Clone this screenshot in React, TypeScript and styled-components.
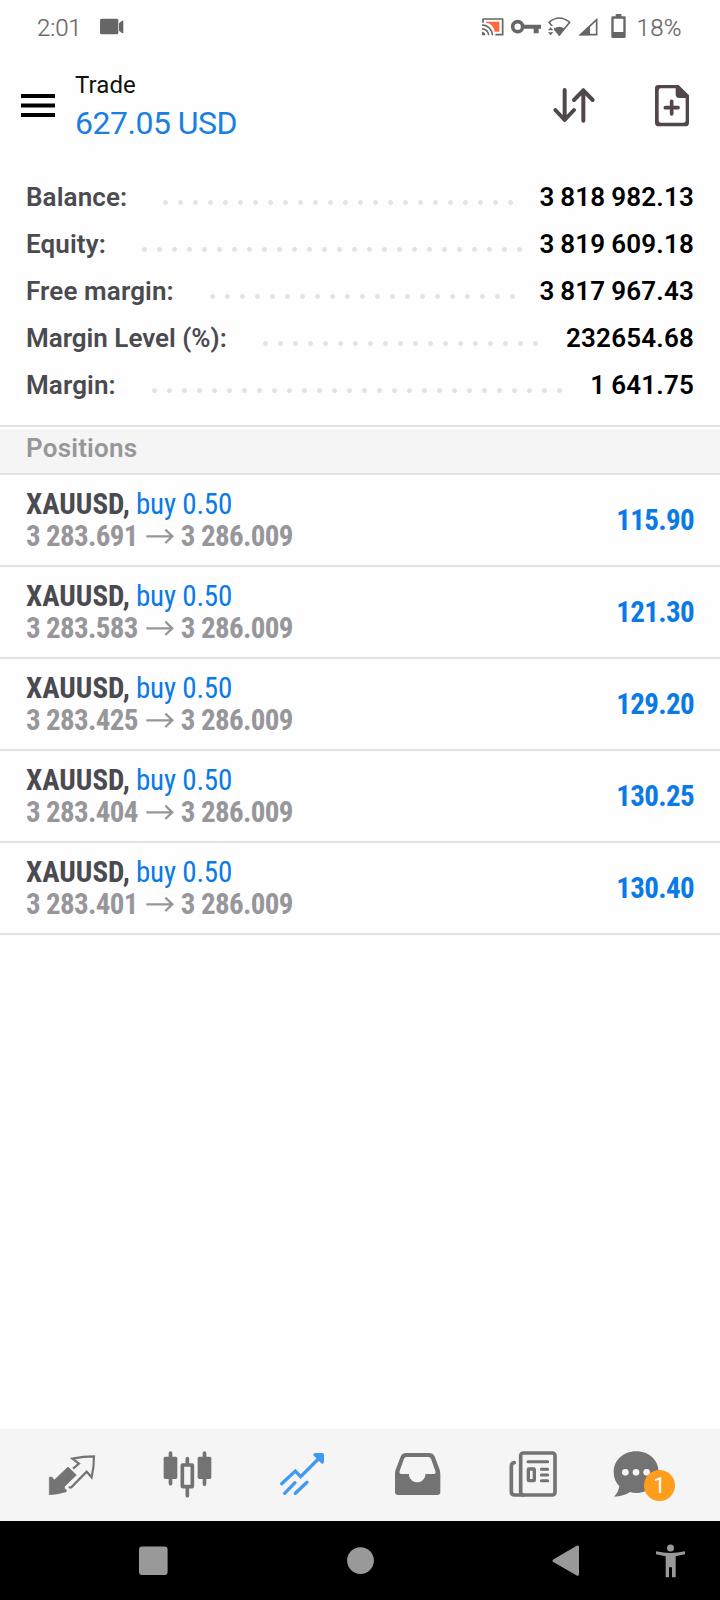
import React from "react";
import styled, { createGlobalStyle } from "styled-components";

const GlobalStyle = createGlobalStyle`
  * { box-sizing: border-box; }
  body {
    margin: 0;
    background: #fefefe;
    font-family: Roboto, "Liberation Sans", sans-serif;
    -webkit-font-smoothing: antialiased;
  }
`;

const Screen = styled.div`
  width: 720px;
  height: 1600px;
  display: flex;
  flex-direction: column;
  background: #fefefe;
  overflow: hidden;
`;

const Glyph = styled.svg<{ $w: number; $h: number; $after?: number }>`
  display: block;
  flex: none;
  width: ${(p) => p.$w}px;
  height: ${(p) => p.$h}px;
  margin-right: ${(p) => p.$after ?? 0}px;
  overflow: visible;
`;

const StatusBar = styled.div`
  height: 56px;
  flex: none;
  display: flex;
  align-items: center;
  justify-content: space-between;
  padding: 0 38px 2px 37px;
  color: #666;
`;

const StatusGroup = styled.div<{ $gap?: number }>`
  display: flex;
  align-items: center;
  gap: ${(p) => p.$gap ?? 0}px;
`;

const StatusText = styled.span<{ $spacing: number }>`
  padding-top: 1px;
  font-size: 24px;
  line-height: 28px;
  font-weight: 300;
  letter-spacing: ${(p) => p.$spacing}px;
  -webkit-text-stroke: 0.2px;
`;

const Header = styled.header`
  height: 117px;
  flex: none;
  display: flex;
  align-items: flex-start;
  padding-left: 21px;
  padding-right: 31px;
`;

const IconButton = styled.button<{ $top: number; $left?: number }>`
  border: 0;
  background: none;
  padding: 0;
  margin-top: ${(p) => p.$top}px;
  margin-left: ${(p) => p.$left ?? 0}px;
`;

const Heading = styled.div`
  flex: 1;
  margin-left: 20px;
  padding-top: 15px;
`;

const Title = styled.div`
  font-size: 24px;
  line-height: 28px;
  color: #111;
  letter-spacing: 0.1px;
`;

const Profit = styled.div`
  margin-top: 5px;
  font-size: 32px;
  line-height: 38px;
  letter-spacing: -0.5px;
  color: #1a80e0;
`;

const Summary = styled.section`
  height: 252px;
  flex: none;
  display: flex;
  flex-direction: column;
`;

const SummaryRow = styled.div`
  height: 47px;
  flex: none;
  display: flex;
  align-items: center;
  padding: 0 26px;
  font-size: 26px;
  font-weight: 600;
`;

const Label = styled.span<{ $tight?: boolean }>`
  color: #4a4a50;
  letter-spacing: ${(p) => (p.$tight ? "0" : "0.12px")};
  white-space: nowrap;
`;

const Leader = styled.i<{ $count: number }>`
  flex: none;
  margin-left: 36px;
  margin-top: 11px;
  height: 5px;
  width: ${(p) => p.$count * 15 - 10}px;
  background: radial-gradient(circle at 2.5px 2.5px, #e3e3e3 2px, transparent 2.8px) 0 0 / 15px 5px repeat-x;
`;

const Amount = styled.span`
  margin-left: auto;
  color: #000;
  letter-spacing: 0.2px;
  word-spacing: -0.9px;
  white-space: nowrap;
`;

const SectionTitle = styled.div`
  height: 50px;
  flex: none;
  border-top: 2px solid #e3e3e3;
  border-bottom: 2px solid #e3e3e3;
  padding: 0 26px 4px;
  display: flex;
  align-items: center;
  background: linear-gradient(#fefefe 2px, #f5f5f5 2px);
  color: #97979b;
  font-size: 26px;
  font-weight: 600;
  letter-spacing: 0.2px;
`;

const PositionRow = styled.div`
  height: 92px;
  flex: none;
  display: flex;
  align-items: center;
  justify-content: space-between;
  padding: 0 26px;
  border-bottom: 2px solid #e3e3e3;
  font-family: "Roboto Condensed", Roboto, sans-serif;
  font-stretch: 75%;
  font-size: 29px;
  line-height: 32px;
  white-space: nowrap;
`;

const PositionInfo = styled.div`
  display: flex;
  flex-direction: column;
`;

const Symbol = styled.div`
  font-weight: 700;
  color: #4a4a50;
`;

const Side = styled.span`
  margin-left: -0.5px;
  font-weight: 400;
  letter-spacing: -0.2px;
  color: #0a7ae6;
`;

const PriceMove = styled.div`
  display: flex;
  align-items: center;
  gap: 8px;
  font-weight: 700;
  letter-spacing: -0.65px;
  color: #97979b;
`;

const Result = styled.span`
  font-weight: 700;
  letter-spacing: -0.65px;
  color: #0a7ae6;
`;

const Spacer = styled.div`
  flex: 1;
`;

const TabBar = styled.nav`
  height: 92px;
  flex: none;
  display: grid;
  grid-template-columns: repeat(6, 115px);
  justify-content: center;
  background: #f5f5f5;
`;

const Tab = styled.div<{ $active?: boolean }>`
  position: relative;
  display: flex;
  align-items: center;
  justify-content: center;
  color: ${(p) => (p.$active ? "#4399f2" : "#737373")};
`;

const Badge = styled.span`
  position: absolute;
  left: 54px;
  top: 41px;
  width: 31px;
  height: 31px;
  border-radius: 50%;
  background: #ff9d1c;
  color: #fff;
  font-size: 22px;
  line-height: 32px;
  text-align: center;
`;

const SystemNav = styled.div`
  height: 79px;
  flex: none;
  display: grid;
  grid-template-columns: 207px 206px 104px 30px;
  align-items: center;
  padding-left: 138px;
  background: #000;
  color: #999;
`;

const VideoIcon = () => (
  <Glyph $w={24} $h={18} viewBox="0 0 72 54" fill="currentColor">
    <rect x="0" y="2" width="55" height="47" rx="5" />
    <path d="M57 16 66 8Q70 6 70 11V43Q70 47 66 45L57 38Z" />
  </Glyph>
);

const CastIcon = () => (
  <Glyph $w={22} $h={18} $after={7} viewBox="0 0 66 54" fill="none" stroke="currentColor" strokeWidth="5">
    <path d="M12 11H52V41H38C36 26 25 15 12 14Z" fill="#ff6a3d" stroke="none" />
    <path d="M3 14V3H62V50H40" strokeLinejoin="round" />
    <path d="M0 21A31 31 0 0 1 31 52M0 32A20 20 0 0 1 20 52" strokeWidth="4.5" />
    <path d="M0 42A10 10 0 0 1 10 52H0Z" fill="currentColor" stroke="none" />
  </Glyph>
);

const KeyIcon = () => (
  <Glyph $w={30} $h={18} $after={7} viewBox="0 0 90 54">
    <circle cx="20" cy="26" r="15" fill="none" stroke="currentColor" strokeWidth="11" />
    <path d="M36 20H90V32H83V46H68V32H36Z" fill="currentColor" />
  </Glyph>
);

const WifiIcon = () => (
  <Glyph $w={23} $h={20} $after={8} viewBox="0 0 69 60">
    <path d="M3 16Q34-10 65 16L34 54Z" fill="none" stroke="currentColor" strokeWidth="5" strokeLinejoin="round" />
    <path d="M18 35Q34 24 50 35L34 56Z" fill="currentColor" />
    <path d="M-1 27H18V58H-1Z" fill="#fefefe" />
    <path d="M0 40 8 31 16 40ZM0 46H16L8 55Z" fill="currentColor" />
  </Glyph>
);

const SignalIcon = () => (
  <Glyph $w={19} $h={18} $after={13} viewBox="0 0 57 54">
    <path d="M5 50 53 5V50Z" fill="none" stroke="currentColor" strokeWidth="5" />
    <path d="M0 52 33 22V52Z" fill="currentColor" />
  </Glyph>
);

const BatteryIcon = () => (
  <Glyph $w={15} $h={24} $after={10} viewBox="0 3 45 72">
    <path
      fillRule="evenodd"
      fill="currentColor"
      d="M14 0H31V7H41Q44 7 44 11V68Q44 72 40 72H5Q1 72 1 68V11Q1 7 5 7H14ZM8 14V54H37V14Z"
    />
  </Glyph>
);

const MenuIcon = () => (
  <Glyph $w={34} $h={24} viewBox="0 0 34 24" fill="#000">
    <rect y="0" width="34" height="4" />
    <rect y="9.5" width="34" height="4" />
    <rect y="19" width="34" height="4" />
  </Glyph>
);

const SortIcon = () => (
  <Glyph
    $w={42}
    $h={36}
    viewBox="0 0 126 108"
    fill="none"
    stroke="#51474a"
    strokeWidth="12"
    strokeLinecap="round"
    strokeLinejoin="round"
  >
    <path d="M35 9V99M7 69 35 99 63 69M91 101V10M63 39 91 10 119 39" />
  </Glyph>
);

const NewOrderIcon = () => (
  <Glyph $w={35} $h={42} viewBox="-2 -2 105 126">
    <path
      fillRule="evenodd"
      fill="#51474a"
      d="M11 1H72L103 32V114Q103 125 92 125H12Q1 125 1 114V11Q1 1 11 1ZM18 11Q12 11 12 18V108Q12 114 19 114H86Q93 114 93 108V40H74Q63 40 63 28V11Z"
    />
    <path d="M51 50V88M32 69H70" stroke="#51474a" strokeWidth="11" strokeLinecap="round" />
  </Glyph>
);

const ArrowIcon = () => (
  <Glyph $w={28} $h={16} $after={-1} viewBox="0 0 84 48" fill="none" stroke="currentColor" strokeWidth="7">
    <path d="M1 25H79M58 5 79 25 58 45" />
  </Glyph>
);

const QuotesIcon = () => (
  <Glyph $w={72} $h={72} viewBox="113 57 216 216">
    <path
      d="M206 141 231 165 195 200Q193 205 201 210V215Q175 223 150 224V172L157 171 165 180Z"
      fill="currentColor"
      stroke="currentColor"
      strokeWidth="2"
      strokeLinejoin="round"
    />
    <path
      d="M221 146 239 131 219 116Q252 109 284 109Q284 142 277 172L262 155 216 202H208"
      fill="none"
      stroke="currentColor"
      strokeWidth="6.5"
      strokeLinejoin="miter"
    />
  </Glyph>
);

const ChartIcon = () => (
  <Glyph $w={72} $h={72} viewBox="456 57 216 216" fill="currentColor">
    <rect x="491" y="110" width="41" height="67" rx="5" />
    <rect x="593" y="110" width="41" height="67" rx="5" />
    <path
      d="M511.5 99V191M613.5 99V193M562 116V132M562 204V227"
      stroke="currentColor"
      strokeWidth="11"
      strokeLinecap="round"
    />
    <rect x="547" y="135" width="30" height="65" rx="1" fill="none" stroke="currentColor" strokeWidth="11" />
  </Glyph>
);

const TradeIcon = () => (
  <Glyph
    $w={72}
    $h={72}
    viewBox="801 57 216 216"
    fill="none"
    stroke="currentColor"
    strokeWidth="10"
    strokeLinecap="round"
  >
    <path d="M845 191 886 153 902 170 964 108M854 220 885 188M886 220 921 187" strokeLinejoin="miter" />
    <path d="M945 104H967V126Z" fill="currentColor" strokeLinejoin="round" />
  </Glyph>
);

const InboxIcon = () => (
  <Glyph $w={72} $h={72} viewBox="66 57 216 216">
    <path
      fillRule="evenodd"
      fill="currentColor"
      d="M137 99H209Q219 99 223 107L238 146Q241 153 241 161V216Q241 225 232 225H114Q105 225 105 216V161Q105 153 108 146L123 107Q127 99 137 99ZM140 111Q134 111 132 116L119 153Q117 162 124 162H147V167A25 25 0 0 0 196 167V162H221Q229 162 226 153L213 116Q211 111 205 111Z"
    />
  </Glyph>
);

const NewsIcon = () => (
  <Glyph
    $w={72}
    $h={72}
    viewBox="411 57 216 216"
    fill="none"
    stroke="currentColor"
    strokeWidth="11"
    strokeLinecap="round"
  >
    <rect x="482" y="99" width="103" height="126" rx="8" />
    <path d="M463 128Q454 129 454 139V216Q454 225 464 225H490" />
    <path d="M504 125H563M544 148H563M544 165H563M544 182H563" strokeWidth="9" />
    <rect x="505" y="147" width="18" height="35" rx="2" strokeWidth="10" />
  </Glyph>
);

const ChatIcon = () => (
  <Glyph $w={72} $h={72} viewBox="756 57 216 216">
    <path
      d="M828 94C868 94 896 121 896 156S868 219 828 219Q818 219 810 216Q792 229 762 230Q775 218 778 199Q761 181 761 156C761 121 790 94 828 94Z"
      fill="currentColor"
    />
    <g fill="#f5f5f5">
      <circle cx="796" cy="157" r="10" />
      <circle cx="828" cy="157" r="10" />
      <circle cx="860" cy="157" r="10" />
    </g>
  </Glyph>
);

const RecentsIcon = () => (
  <Glyph $w={30} $h={30} viewBox="0 0 30 30">
    <rect x="1" y="0.5" width="28.6" height="28.6" rx="3" fill="currentColor" />
  </Glyph>
);

const HomeIcon = () => (
  <Glyph $w={30} $h={30} viewBox="0 0 30 30">
    <circle cx="15.5" cy="14.6" r="13.4" fill="currentColor" />
  </Glyph>
);

const BackIcon = () => (
  <Glyph $w={30} $h={30} viewBox="0 0 30 30">
    <path
      d="M3 14.7 26.5 1V28.2Z"
      fill="currentColor"
      stroke="currentColor"
      strokeWidth="3"
      strokeLinejoin="round"
    />
  </Glyph>
);

const AccessibilityIcon = () => (
  <Glyph $w={30} $h={34} viewBox="0 0 90 102" fill="currentColor">
    <circle cx="46.5" cy="12" r="10.5" />
    <path d="M3 22Q46 32 90 22V31L62 37V100H51V70H42V100H32V37L3 31Z" />
  </Glyph>
);

const summary = [
  { label: "Balance:", value: "3 818 982.13", dots: 24 },
  { label: "Equity:", value: "3 819 609.18", dots: 26 },
  { label: "Free margin:", value: "3 817 967.43", dots: 21 },
  { label: "Margin Level (%):", value: "232654.68", dots: 19, tight: true },
  { label: "Margin:", value: "1 641.75", dots: 28 },
];

const positions = [
  { open: "3 283.691", current: "3 286.009", result: "115.90" },
  { open: "3 283.583", current: "3 286.009", result: "121.30" },
  { open: "3 283.425", current: "3 286.009", result: "129.20" },
  { open: "3 283.404", current: "3 286.009", result: "130.25" },
  { open: "3 283.401", current: "3 286.009", result: "130.40" },
];

export default function App() {
  return (
    <Screen>
      <GlobalStyle />
      <StatusBar>
        <StatusGroup $gap={18}>
          <StatusText $spacing={-0.1}>2:01</StatusText>
          <VideoIcon />
        </StatusGroup>
        <StatusGroup>
          <CastIcon />
          <KeyIcon />
          <WifiIcon />
          <SignalIcon />
          <BatteryIcon />
          <StatusText $spacing={0.4}>18%</StatusText>
        </StatusGroup>
      </StatusBar>

      <Header>
        <IconButton $top={38} aria-label="Menu">
          <MenuIcon />
        </IconButton>
        <Heading>
          <Title>Trade</Title>
          <Profit>627.05 USD</Profit>
        </Heading>
        <IconButton $top={31} aria-label="Sort">
          <SortIcon />
        </IconButton>
        <IconButton $top={28} $left={59} aria-label="New order">
          <NewOrderIcon />
        </IconButton>
      </Header>

      <Summary>
        {summary.map((row) => (
          <SummaryRow key={row.label}>
            <Label $tight={row.tight}>{row.label}</Label>
            <Leader $count={row.dots} />
            <Amount>{row.value}</Amount>
          </SummaryRow>
        ))}
      </Summary>

      <SectionTitle>Positions</SectionTitle>
      {positions.map((p) => (
        <PositionRow key={p.open}>
          <PositionInfo>
            <Symbol>
              XAUUSD, <Side>buy 0.50</Side>
            </Symbol>
            <PriceMove>
              <span>{p.open}</span>
              <ArrowIcon />
              <span>{p.current}</span>
            </PriceMove>
          </PositionInfo>
          <Result>{p.result}</Result>
        </PositionRow>
      ))}

      <Spacer />

      <TabBar>
        <Tab>
          <QuotesIcon />
        </Tab>
        <Tab>
          <ChartIcon />
        </Tab>
        <Tab $active>
          <TradeIcon />
        </Tab>
        <Tab>
          <InboxIcon />
        </Tab>
        <Tab>
          <NewsIcon />
        </Tab>
        <Tab>
          <ChatIcon />
          <Badge>1</Badge>
        </Tab>
      </TabBar>
      <SystemNav>
        <RecentsIcon />
        <HomeIcon />
        <BackIcon />
        <AccessibilityIcon />
      </SystemNav>
    </Screen>
  );
}
